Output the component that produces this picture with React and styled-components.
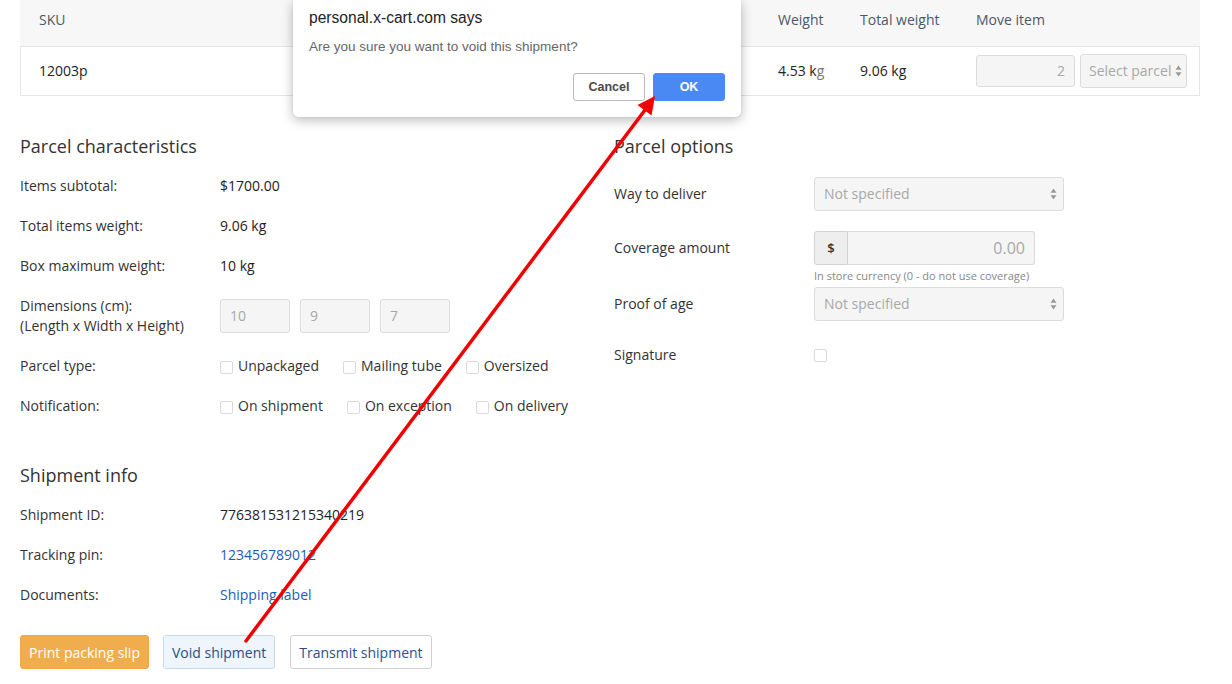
import React from "react";
import styled, { createGlobalStyle, css } from "styled-components";

const Global = createGlobalStyle`
  html, body { margin: 0; padding: 0; background: #fff; }
  body { font-family: "Open Sans", sans-serif; font-size: 14px; color: #333; }
  * { box-sizing: border-box; }
`;

const Page = styled.div`
  position: relative;
  width: 1232px;
  height: 684px;
  overflow: hidden;
  padding: 0 32px 0 20px;
`;

/* ---------- Items table ---------- */
const Table = styled.div`
  width: 1180px;
`;

const TRow = styled.div`
  display: grid;
  grid-template-columns: 739px 82px 116px 1fr;
  line-height: 20px;
  ${(p) =>
    p.$head
      ? css`
          background: #f7f7f7;
          height: 46px;
          padding-top: 10px;
          align-items: start;
          color: #4d5866;
        `
      : css`
          height: 50px;
          border: 1px solid #e6e6e6;
          align-items: center;
          color: #222;
        `}
`;

const Cell = styled.div`
  padding-left: ${(p) => (p.$body ? "18px" : "19px")};
  white-space: nowrap;
  display: flex;
  align-items: center;
  gap: 5px;
`;

const Muted = styled.span`
  color: ${(p) => p.$c || "#888"};
`;

const BaseField = styled.div`
  position: relative;
  height: ${(p) => p.$h || 34}px;
  width: ${(p) => (p.$w ? `${p.$w}px` : "auto")};
  background: #f5f5f5;
  border: 1px solid #dcdcdc;
  border-radius: 3px;
  color: #a8a8a8;
  display: flex;
  align-items: center;
  justify-content: ${(p) => (p.$right ? "flex-end" : "flex-start")};
  padding: 0 ${(p) => (p.$right ? "9px" : "0")} 0 ${(p) => (p.$right ? "0" : p.$pl || "9px")};
  font-size: 14px;
  white-space: nowrap;
`;

const Arrows = styled.svg`
  position: absolute;
  right: ${(p) => p.$r || 6}px;
  top: 50%;
  transform: translateY(-50%);
`;

const SelectArrows = ({ r }) => (
  <Arrows $r={r} width="7" height="12" viewBox="0 0 7 12">
    <path d="M3.5 0.5 L6.5 4.8 H0.5 Z" fill="#9a9a9a" />
    <path d="M0.5 7.2 H6.5 L3.5 11.5 Z" fill="#9a9a9a" />
  </Arrows>
);

/* ---------- Forms ---------- */
const Columns = styled.div`
  display: grid;
  grid-template-columns: 594px 1fr;
  margin-top: 37px;
  align-items: start;
`;

const Section = styled.section`
  margin-top: ${(p) => p.$mt || 0}px;
`;

const Heading = styled.h3`
  margin: 0 0 ${(p) => p.$mb || 17}px;
  font-size: 18px;
  font-weight: 400;
  line-height: 26px;
  color: #333;
`;

const FormRow = styled.div`
  display: grid;
  grid-template-columns: 200px 1fr;
  align-items: ${(p) => p.$align || "center"};
  line-height: 20px;
  margin-bottom: ${(p) => (p.$mb === undefined ? 20 : p.$mb)}px;
  min-height: ${(p) => p.$h || 20}px;
`;

const Label = styled.div`
  color: #333;
  display: flex;
  align-items: center;
  min-height: ${(p) => p.$h || 20}px;
`;

const Value = styled.div`
  color: #222;
  display: flex;
  align-items: center;
  gap: ${(p) => p.$gap || 0}px;
  flex-wrap: wrap;
`;

const Link = styled.a`
  color: #1d5cba;
  text-decoration: none;
`;

const CheckGroup = styled.div`
  display: flex;
  gap: 24px;
`;

const CheckItem = styled.label`
  display: inline-flex;
  align-items: center;
  gap: 5px;
  color: #333;
`;

const Box = styled.span`
  width: 13px;
  height: 13px;
  border: 1px solid #dadada;
  border-radius: 2px;
  background: #fff;
  margin-top: ${(p) => (p.$mt === undefined ? 3 : p.$mt)}px;
  display: inline-block;
  flex: none;
`;

const InputGroup = styled.div`
  display: flex;
  width: 221px;
  height: 34px;
`;

const Addon = styled.div`
  width: 34px;
  background: #eeeeee;
  border: 1px solid #d2d2d2;
  border-radius: 3px 0 0 3px;
  display: flex;
  align-items: center;
  justify-content: center;
  font-weight: 600;
  font-size: 13px;
  color: #333;
`;

const GroupInput = styled.div`
  flex: 1;
  background: #f5f5f5;
  border: 1px solid #dcdcdc;
  border-left: none;
  border-radius: 0 3px 3px 0;
  color: #a8a8a8;
  font-size: 16px;
  display: flex;
  align-items: center;
  justify-content: flex-end;
  padding-right: 9px;
`;

const Help = styled.div`
  width: 100%;
  font-size: 11px;
  line-height: 19px;
  padding-top: 1px;
  color: #888;
`;

/* ---------- Buttons ---------- */
const Buttons = styled.div`
  display: flex;
  margin-top: 30px;
`;

const Button = styled.button`
  height: 34px;
  padding: 0 8px;
  font-family: "Open Sans", sans-serif;
  font-size: 14px;
  border-radius: 3px;
  border: 1px solid;
  margin-right: ${(p) => p.$mr || 0}px;
  cursor: pointer;
  ${(p) =>
    p.$variant === "warning"
      ? css`
          background: #f0ad4e;
          border-color: #eea944;
          color: #fff;
        `
      : p.$variant === "light"
      ? css`
          background: #eef5fd;
          border-color: #c7dbef;
          color: #2c4c88;
        `
      : css`
          background: #fff;
          border-color: #cfcfcf;
          color: #2a4f90;
        `}
`;

/* ---------- Browser dialog ---------- */
const Dialog = styled.div`
  position: absolute;
  left: 293px;
  top: 0;
  width: 448px;
  background: #fff;
  border-radius: 0 0 5px 5px;
  box-shadow: 0 3px 12px rgba(0, 0, 0, 0.28), 0 0 1px rgba(0, 0, 0, 0.25);
  padding: 8px 16px 16px;
  font-family: "Liberation Sans", Arial, sans-serif;
  z-index: 5;
`;

const DialogTitle = styled.div`
  font-size: 15.6px;
  line-height: 20px;
  color: #222;
`;

const DialogText = styled.div`
  margin-top: 11px;
  font-size: 13.5px;
  line-height: 16px;
  color: #666;
`;

const DialogActions = styled.div`
  display: flex;
  justify-content: flex-end;
  gap: 8px;
  margin-top: 18px;
`;

const DialogButton = styled.button`
  width: 72px;
  height: 28px;
  border-radius: 3px;
  font-family: "Liberation Sans", Arial, sans-serif;
  font-size: 12.5px;
  font-weight: 700;
  ${(p) =>
    p.$primary
      ? css`
          background: #4a89f3;
          border: 1px solid #4a89f3;
          color: #fff;
        `
      : css`
          background: #fff;
          border: 1px solid #b8b8b8;
          color: #4a4a4a;
        `}
`;

const Overlay = styled.svg`
  position: absolute;
  left: 0;
  top: 0;
  pointer-events: none;
  z-index: 10;
`;

export default function App() {
  return (
    <>
      <Global />
      <Page>
        <Table>
          <TRow $head>
            <Cell>SKU</Cell>
            <Cell>Weight</Cell>
            <Cell>Total weight</Cell>
            <Cell>Move item</Cell>
          </TRow>
          <TRow>
            <Cell $body>12003p</Cell>
            <Cell $body>
              <span>
                4.53 k<Muted $c="#777">g</Muted>
              </span>
            </Cell>
            <Cell $body>9.06 kg</Cell>
            <Cell $body>
              <BaseField $w={99} $h={32} $right>
                2
              </BaseField>
              <BaseField $w={107} $h={34} $pl="8px">
                Select parcel
                <SelectArrows r={4} />
              </BaseField>
            </Cell>
          </TRow>
        </Table>

        <Columns>
          <Section>
            <Heading>Parcel characteristics</Heading>
            <FormRow>
              <Label>Items subtotal:</Label>
              <Value>$1700.00</Value>
            </FormRow>
            <FormRow>
              <Label>Total items weight:</Label>
              <Value>9.06 kg</Value>
            </FormRow>
            <FormRow>
              <Label>Box maximum weight:</Label>
              <Value>10 kg</Value>
            </FormRow>
            <FormRow $h={40}>
              <Label>
                Dimensions (cm):
                <br />
                (Length x Width x Height)
              </Label>
              <Value $gap={10}>
                <BaseField $w={70}>10</BaseField>
                <BaseField $w={70}>9</BaseField>
                <BaseField $w={70}>7</BaseField>
              </Value>
            </FormRow>
            <FormRow>
              <Label>Parcel type:</Label>
              <CheckGroup>
                <CheckItem>
                  <Box />
                  Unpackaged
                </CheckItem>
                <CheckItem>
                  <Box />
                  Mailing tube
                </CheckItem>
                <CheckItem>
                  <Box />
                  Oversized
                </CheckItem>
              </CheckGroup>
            </FormRow>
            <FormRow $mb={0}>
              <Label>Notification:</Label>
              <CheckGroup>
                <CheckItem>
                  <Box />
                  On shipment
                </CheckItem>
                <CheckItem>
                  <Box />
                  On exception
                </CheckItem>
                <CheckItem>
                  <Box />
                  On delivery
                </CheckItem>
              </CheckGroup>
            </FormRow>
          </Section>

          <Section>
            <Heading $mb={18}>Parcel options</Heading>
            <FormRow $align="start">
              <Label $h={34}>Way to deliver</Label>
              <BaseField $w={250}>
                Not specified
                <SelectArrows />
              </BaseField>
            </FormRow>
            <FormRow $align="start" $mb={2}>
              <Label $h={34}>Coverage amount</Label>
              <Value>
                <InputGroup>
                  <Addon>$</Addon>
                  <GroupInput>0.00</GroupInput>
                </InputGroup>
                <Help>In store currency (0 - do not use coverage)</Help>
              </Value>
            </FormRow>
            <FormRow $align="start">
              <Label $h={34}>Proof of age</Label>
              <BaseField $w={250}>
                Not specified
                <SelectArrows />
              </BaseField>
            </FormRow>
            <FormRow $mb={0}>
              <Label $h={28}>Signature</Label>
              <Value>
                <Box $mt={0} />
              </Value>
            </FormRow>
          </Section>
        </Columns>

        <Section $mt={46}>
          <Heading>Shipment info</Heading>
          <FormRow>
            <Label>Shipment ID:</Label>
            <Value>776381531215340219</Value>
          </FormRow>
          <FormRow>
            <Label>Tracking pin:</Label>
            <Value>
              <Link href="#">123456789012</Link>
            </Value>
          </FormRow>
          <FormRow>
            <Label>Documents:</Label>
            <Value>
              <Link href="#">Shipping label</Link>
            </Value>
          </FormRow>
          <Buttons>
            <Button $variant="warning" $mr={14}>
              Print packing slip
            </Button>
            <Button $variant="light" $mr={15}>
              Void shipment
            </Button>
            <Button>Transmit shipment</Button>
          </Buttons>
        </Section>

        <Dialog>
          <DialogTitle>personal.x-cart.com says</DialogTitle>
          <DialogText>Are you sure you want to void this shipment?</DialogText>
          <DialogActions>
            <DialogButton>Cancel</DialogButton>
            <DialogButton $primary>OK</DialogButton>
          </DialogActions>
        </Dialog>

        <Overlay width="1232" height="684" viewBox="0 0 1232 684">
          <line x1="246" y1="641" x2="645" y2="110" stroke="#f20000" strokeWidth="3.5" strokeLinecap="round" />
          <polygon points="655,96 651.5,115.5 637.5,105" fill="#f20000" />
        </Overlay>
      </Page>
    </>
  );
}
